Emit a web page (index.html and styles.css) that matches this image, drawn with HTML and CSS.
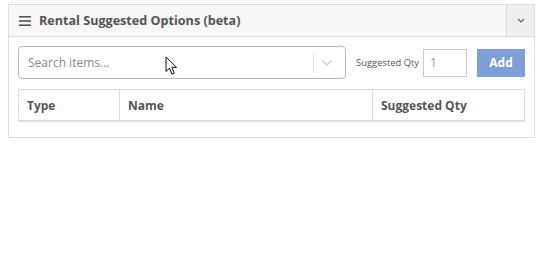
FILE: index.html
```html
<!DOCTYPE html>
<html lang="en">
<head>
    <meta charset="UTF-8">
    <meta name="viewport" content="width=device-width, initial-scale=1.0">
    <title>Rental Suggested Options</title>
    <link rel="stylesheet" href="styles.css">
</head>
<body>
  <div class="panel">
    <div class="panel-heading">
      <div class="panel-title">
        <svg class="menu-icon" width="12" height="10" viewBox="0 0 12 10">
          <rect x="0" y="0" width="12" height="1.6" fill="#555"/>
          <rect x="0" y="4.2" width="12" height="1.6" fill="#555"/>
          <rect x="0" y="8.4" width="12" height="1.6" fill="#555"/>
        </svg>
        Rental Suggested Options (beta)
      </div>
      <div class="panel-toggle">
        <svg width="8" height="5" viewBox="0 0 8 5"><path d="M1 1 L4 4 L7 1" fill="none" stroke="#666" stroke-width="1.2"/></svg>
      </div>
    </div>
    <div class="panel-body">
      <div class="add-row">
        <div class="search-select">
          <span class="placeholder">Search items...</span>
          <span class="sep"></span>
          <svg class="chevron" width="12" height="8" viewBox="0 0 12 8"><path d="M1.5 1.5 L6 6 L10.5 1.5" fill="none" stroke="#ccc" stroke-width="1.5"/></svg>
        </div>
        <label class="qty-label" for="qty">Suggested Qty</label>
        <input class="qty-input" id="qty" type="text" value="1">
        <button class="btn-add">Add</button>
      </div>
      <table class="options-table">
        <thead>
          <tr>
            <th class="col-type">Type</th>
            <th class="col-name">Name</th>
            <th class="col-qty">Suggested Qty</th>
          </tr>
        </thead>
      </table>
    </div>
  </div>
  <svg class="cursor" width="13" height="20" viewBox="0 0 13 20">
    <path d="M1 1 L1 15.5 L4.5 12.2 L7 18.2 L9.3 17.2 L6.9 11.4 L11.6 11.4 Z" fill="#fff" stroke="#111" stroke-width="1" stroke-linejoin="round"/>
  </svg>
</body>
</html>
```
FILE: styles.css
```css
body, html {
  margin: 0;
  background-color: #fff;
  font-family: 'Open Sans', 'Liberation Sans', sans-serif;
}
body {
  padding: 4px 6px 0 8px;
}
.panel {
  width: 525px;
  border: 1px solid #ddd;
  background-color: #fff;
}
.panel-heading {
  display: flex;
  height: 31px;
  background-color: #f7f7f7;
  border-bottom: 1px solid #ddd;
}
.panel-title {
  flex: 1;
  display: flex;
  align-items: center;
  padding-left: 10px;
  font-size: 12.6px;
  font-weight: bold;
  color: #555;
}
.menu-icon {
  margin-right: 8px;
}
.panel-toggle {
  width: 27px;
  display: flex;
  align-items: center;
  justify-content: center;
  background-color: #efefef;
  border-left: 1px solid #ddd;
}
.panel-body {
  padding: 9px 9px 15px 9px;
}
.add-row {
  display: flex;
  align-items: center;
}
.search-select {
  flex: 1;
  min-width: 0;
  height: 31px;
  border: 1px solid #bbb;
  border-radius: 4px;
  display: flex;
  align-items: center;
}
.placeholder {
  flex: 1;
  padding-left: 9px;
  font-size: 12px;
  color: #888;
}
.sep {
  width: 1px;
  height: 20px;
  background-color: #ddd;
}
.chevron {
  margin: 0 12px 0 7px;
}
.qty-label {
  flex-shrink: 0;
  white-space: nowrap;
  margin-left: 10px;
  font-size: 9.4px;
  color: #555;
}
.qty-input {
  flex-shrink: 0;
  width: 36px;
  height: 26px;
  margin-left: 4px;
  padding: 0 0 0 6px;
  border: 1px solid #ccc;
  font-family: 'Open Sans', 'Liberation Sans', sans-serif;
  font-size: 12px;
  color: #999;
  box-sizing: content-box;
  outline: none;
}
.btn-add {
  flex-shrink: 0;
  width: 48px;
  height: 28px;
  margin-left: 10px;
  border: none;
  background-color: #7f9fd9;
  color: #fff;
  font-family: 'Open Sans', 'Liberation Sans', sans-serif;
  font-size: 12px;
  font-weight: bold;
}
.options-table {
  width: 507px;
  margin-top: 10px;
  border-collapse: collapse;
  border: 1px solid #ddd;
  border-bottom: 2px solid #ddd;
}
.options-table th {
  height: 30px;
  padding: 0 8px;
  text-align: left;
  font-size: 12px;
  font-weight: bold;
  color: #555;
  border-left: 1px solid #ddd;
  border-bottom: 2px solid #ddd;
}
.col-type {
  width: 84px;
}
.col-name {
  width: 236px;
}
.cursor {
  position: absolute;
  left: 165px;
  top: 56px;
}
```
